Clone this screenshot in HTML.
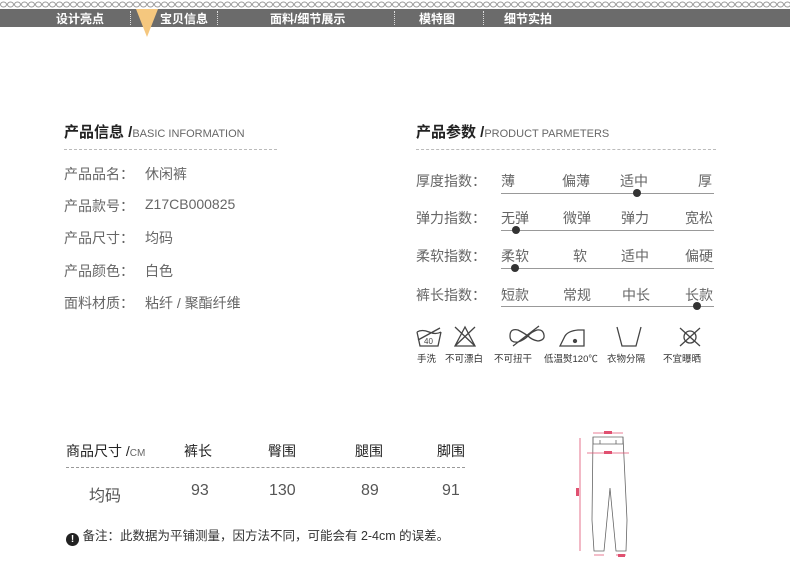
<!DOCTYPE html>
<html><head><meta charset="utf-8"><style>
body{margin:0;width:790px;height:574px;background:#fff;position:relative;overflow:hidden;font-family:"Liberation Sans","Noto Sans CJK SC",sans-serif;color:#555}
.a{position:absolute;white-space:nowrap}
.nav{position:absolute;left:0;top:9px;width:790px;height:18px;background:#6b6b6b}
.nav span{position:absolute;top:1px;color:#fff;font-size:12px;font-weight:bold}
.sep{position:absolute;top:2px;height:14px;border-left:1px dotted #ddd}
.t{font-size:15px;color:#222;font-weight:bold}
.t small{font-size:11px;color:#666;font-weight:normal}
.dash{position:absolute;border-top:1px dashed #bbb;height:0}
.r{font-size:14px;color:#666}
.line{position:absolute;left:501px;width:213px;height:1px;background:#999}
.dot{position:absolute;width:8px;height:8px;border-radius:50%;background:#333}
.ic{position:absolute;top:351px;font-size:9.5px;color:#333}
</style></head><body>
<svg class="a" style="left:0;top:0" width="790" height="9"><defs><pattern id="p" width="7" height="9" patternUnits="userSpaceOnUse"><ellipse cx="3.5" cy="4.5" rx="3" ry="2.5" fill="none" stroke="#999" stroke-width="1"/></pattern></defs><rect width="790" height="9" fill="url(#p)"/></svg>
<div class="nav">
<span style="left:56px">设计亮点</span>
<div class="sep" style="left:130px"></div>
<span style="left:160px">宝贝信息</span>
<div class="sep" style="left:217px"></div>
<span style="left:270px">面料/细节展示</span>
<div class="sep" style="left:394px"></div>
<span style="left:419px">模特图</span>
<div class="sep" style="left:483px"></div>
<span style="left:504px">细节实拍</span>
</div>
<svg class="a" style="left:136px;top:9px" width="22" height="29"><polygon points="0,0 22,0 11,28" fill="#f5c77e"/></svg>

<div class="a t" style="left:64px;top:121px">产品信息 /<small>BASIC INFORMATION</small></div>
<div class="dash" style="left:64px;top:149px;width:213px"></div>
<div class="a r" style="left:64px;top:164px">产品品名：</div><div class="a r" style="left:145px;top:164px">休闲裤</div>
<div class="a r" style="left:64px;top:196px">产品款号：</div><div class="a r" style="left:145px;top:196px">Z17CB000825</div>
<div class="a r" style="left:64px;top:228px">产品尺寸：</div><div class="a r" style="left:145px;top:228px">均码</div>
<div class="a r" style="left:64px;top:261px">产品颜色：</div><div class="a r" style="left:145px;top:261px">白色</div>
<div class="a r" style="left:64px;top:293px">面料材质：</div><div class="a r" style="left:145px;top:293px">粘纤 / 聚酯纤维</div>

<div class="a t" style="left:416px;top:121px">产品参数 /<small>PRODUCT PARMETERS</small></div>
<div class="dash" style="left:416px;top:149px;width:300px"></div>

<div class="a r" style="left:416px;top:171px">厚度指数：</div>
<div class="a r" style="left:501px;top:171px">薄</div><div class="a r" style="left:562px;top:171px">偏薄</div><div class="a r" style="left:620px;top:171px">适中</div><div class="a r" style="left:698px;top:171px">厚</div>
<div class="line" style="top:193px"></div><div class="dot" style="left:633px;top:189px"></div>

<div class="a r" style="left:416px;top:208px">弹力指数：</div>
<div class="a r" style="left:501px;top:208px">无弹</div><div class="a r" style="left:563px;top:208px">微弹</div><div class="a r" style="left:621px;top:208px">弹力</div><div class="a r" style="left:685px;top:208px">宽松</div>
<div class="line" style="top:230px"></div><div class="dot" style="left:512px;top:226px"></div>

<div class="a r" style="left:416px;top:246px">柔软指数：</div>
<div class="a r" style="left:501px;top:246px">柔软</div><div class="a r" style="left:573px;top:246px">软</div><div class="a r" style="left:621px;top:246px">适中</div><div class="a r" style="left:685px;top:246px">偏硬</div>
<div class="line" style="top:268px"></div><div class="dot" style="left:511px;top:264px"></div>

<div class="a r" style="left:416px;top:285px">裤长指数：</div>
<div class="a r" style="left:501px;top:285px">短款</div><div class="a r" style="left:563px;top:285px">常规</div><div class="a r" style="left:622px;top:285px">中长</div><div class="a r" style="left:685px;top:285px">长款</div>
<div class="line" style="top:306px"></div><div class="dot" style="left:693px;top:302px"></div>

<svg class="a" style="left:410px;top:322px" width="310" height="28" fill="none" stroke="#444" stroke-width="1.3">
<path d="M7 10 L10 24 H28 L31 10 M7 10 Q12 7 19 10 Q26 13 31 10"/><path d="M8 18 L30 6"/><text x="14" y="22" font-size="8" fill="#444" stroke="none">40</text>
<path d="M55 5 L45 24 H65 Z M45 5 L65 24 M65 5 L45 24"/>
<path d="M100 14 Q100 6 108 8 Q114 11 118 14 Q122 18 128 19 Q135 18 134 13 Q133 7 127 8 Q121 10 118 14 Q114 18 108 20 Q100 21 100 14Z M103 24 L129 4"/>
<path d="M150 24 L155 14 Q158 9 168 8 L174 8 L174 24 Z"/><circle cx="165" cy="19" r="1.5" fill="#444"/>
<path d="M207 5 L212 24 H226 L231 5"/>
<path d="M270 6 L290 24 M290 6 L270 24"/><circle cx="280" cy="15" r="6"/>
</svg>
<div class="ic" style="left:417px">手洗</div>
<div class="ic" style="left:445px">不可漂白</div>
<div class="ic" style="left:494px">不可扭干</div>
<div class="ic" style="left:544px">低温熨120℃</div>
<div class="ic" style="left:607px">衣物分隔</div>
<div class="ic" style="left:663px">不宜曝晒</div>

<div class="a" style="left:66px;top:441px;font-size:14px;color:#222">商品尺寸 /<span style="font-size:10px;color:#666">CM</span></div>
<div class="a" style="left:184px;top:441px;font-size:14px;color:#222">裤长</div>
<div class="a" style="left:268px;top:441px;font-size:14px;color:#222">臀围</div>
<div class="a" style="left:355px;top:441px;font-size:14px;color:#222">腿围</div>
<div class="a" style="left:437px;top:441px;font-size:14px;color:#222">脚围</div>
<div class="dash" style="left:66px;top:467px;width:399px;border-color:#999"></div>
<div class="a" style="left:89px;top:482px;font-size:16px">均码</div>
<div class="a" style="left:191px;top:482px;font-size:16px">93</div>
<div class="a" style="left:269px;top:482px;font-size:16px">130</div>
<div class="a" style="left:361px;top:482px;font-size:16px">89</div>
<div class="a" style="left:442px;top:482px;font-size:16px">91</div>
<div class="a" style="left:66px;top:525px;font-size:12.5px;color:#333"><span style="display:inline-block;width:13px;height:13px;border-radius:50%;background:#222;color:#fff;text-align:center;font-size:10px;line-height:13px;font-weight:bold;vertical-align:-2px">!</span> 备注：此数据为平铺测量，因方法不同，可能会有 2-4cm 的误差。</div>

<svg class="a" style="left:570px;top:428px" width="80" height="132" fill="none" stroke="#666" stroke-width="0.8">
<path d="M23 9 H53 L57 92 L56 123 H46 L40 60 L34 123 H24 L22 92 Z"/>
<path d="M23 9 V16 H53 V9"/><path d="M30 12 V16 M46 12 V16"/>
<g stroke="#e05070"><path d="M23 5 H53"/><path d="M17 25 H59"/><path d="M24 127 H34 M46 127 H56"/><path d="M10 10 V123"/></g>
<g fill="#e05070" stroke="none" font-size="3"><rect x="34" y="3" width="8" height="3"/><rect x="34" y="23" width="8" height="3"/><rect x="6" y="60" width="3" height="8"/><rect x="48" y="126" width="7" height="3"/></g>
</svg>
</body></html>
